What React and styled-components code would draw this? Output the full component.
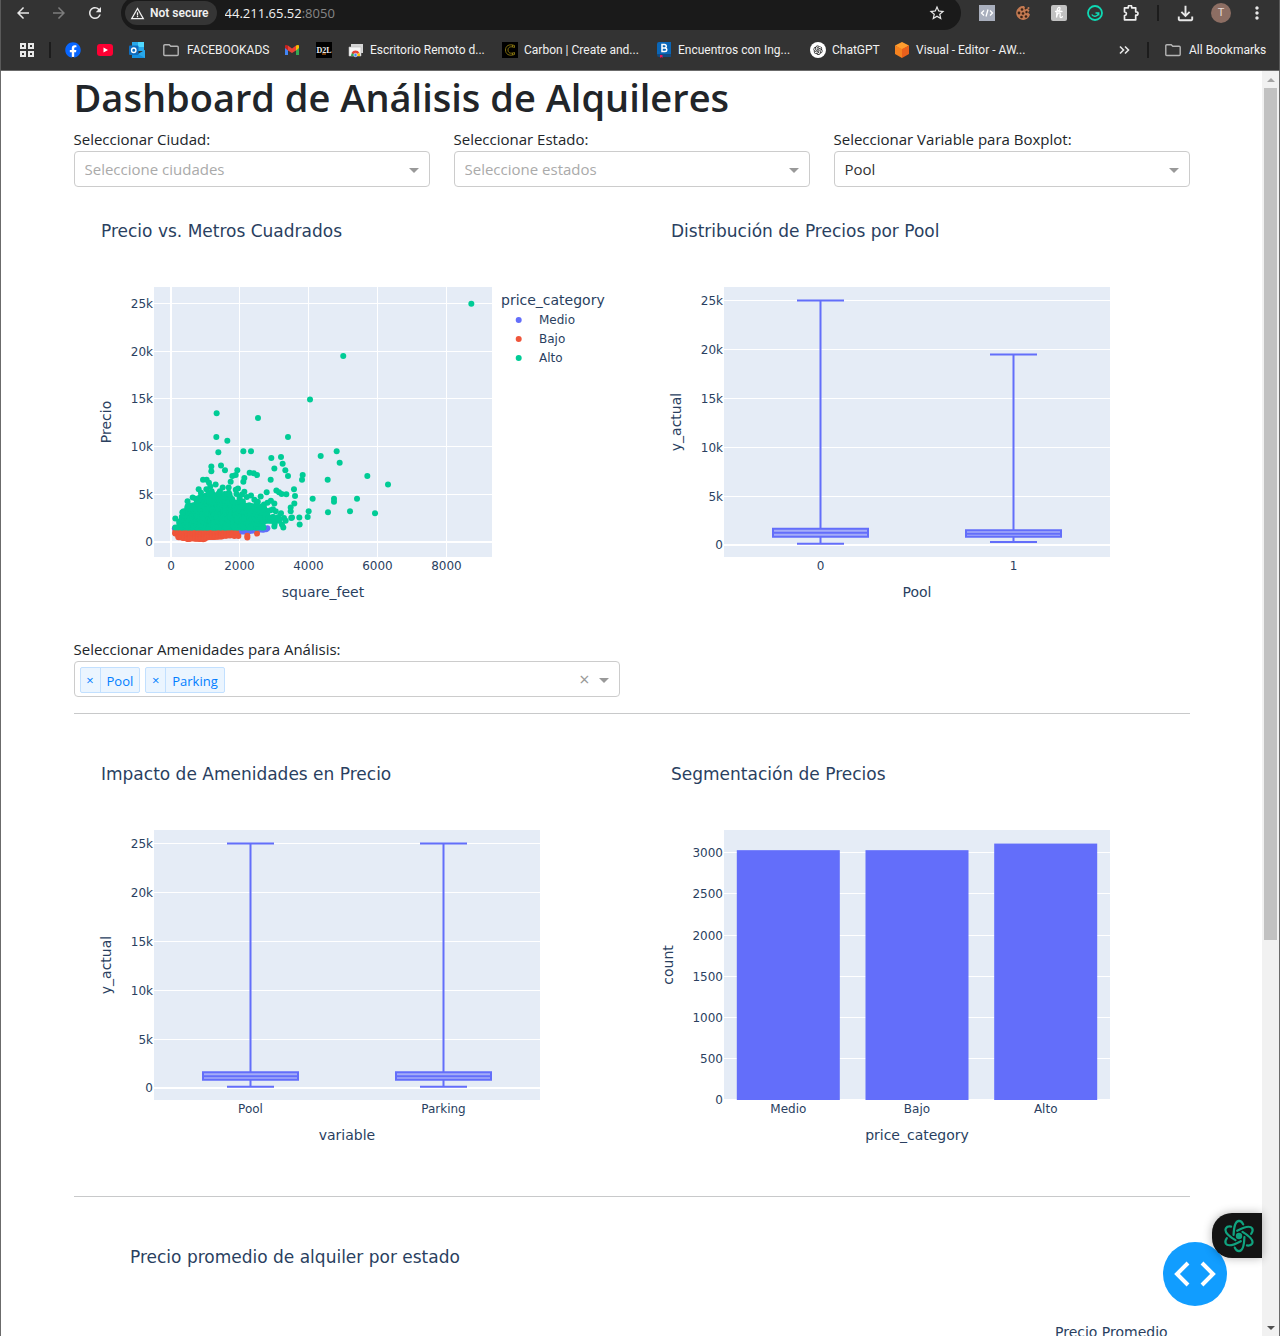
import React, { useState } from "react";
import styled, { createGlobalStyle } from "styled-components";
import {
  MdArrowBack,
  MdArrowForward,
  MdRefresh,
  MdStarBorder,
  MdWarningAmber,
  MdMoreVert,
  MdOutlineFileDownload,
} from "react-icons/md";
import { FaFacebook, FaYoutube, FaCookieBite } from "react-icons/fa";
import { AiOutlineOpenAI } from "react-icons/ai";

const uiFont = '"Open Sans", "Noto Sans", sans-serif';
const chromeFont = 'Roboto, "Open Sans", sans-serif';
const plotFont = '"DejaVu Sans", sans-serif';

const GlobalStyle = createGlobalStyle`
  *, *::before, *::after { box-sizing: border-box; }
  body {
    margin: 0;
    background: #fff;
    color: #212529;
    font-family: ${uiFont};
    font-size: 15px;
    line-height: 24px;
  }
  button, input, select { font: inherit; color: inherit; }
`;

/* ---------- browser window ---------- */

const Window = styled.div`
  display: flex;
  flex-direction: column;
  height: 100vh;
  overflow: hidden;
`;

const Chrome = styled.header`
  background: #333;
  color: #e8e8e8;
  border-bottom: 1px solid #6b6b6b;
  border-left: 1px solid #5a5a5a;
  border-right: 1px solid #5a5a5a;
  font-family: ${chromeFont};
  font-size: 12px;
  line-height: 16px;
`;

const Toolbar = styled.div`
  display: flex;
  align-items: flex-start;
  height: 30px;
  padding: 0 4px;
  overflow: hidden;
`;

const IconButton = styled.button`
  display: flex;
  align-items: center;
  justify-content: center;
  flex: none;
  width: 36px;
  height: 26px;
  padding: 0;
  border: 0;
  background: none;
  color: ${(p) => (p.$dim ? "#7d7d7d" : "#e8e8e8")};
`;

const AddressBar = styled.div`
  display: flex;
  align-items: center;
  flex: 1;
  height: 34px;
  margin: -4px 8px 0;
  padding: 0 6px 0 4px;
  border-radius: 17px;
  background: #1a1a1a;
`;

const SecurityChip = styled.button`
  display: flex;
  align-items: center;
  gap: 5px;
  height: 24px;
  padding: 0 8px 0 5px;
  border: 0;
  border-radius: 12px;
  background: #353535;
  color: #f0f0f0;
  font-weight: 600;
  white-space: nowrap;
`;

const UrlInput = styled.input`
  field-sizing: content;
  margin: 0 0 0 8px;
  padding: 0;
  border: 0;
  outline: 0;
  background: none;
  color: #f1f1f1;
  font-family: ${uiFont};
  font-size: 13px;
`;

const Port = styled.span`
  flex: 1;
  color: #868686;
  font-family: ${uiFont};
  font-size: 13px;
`;

const BarDivider = styled.span`
  flex: none;
  width: 2px;
  height: 16px;
  margin: ${(p) => p.$margin};
  background: #1c1c1c;
`;

const Avatar = styled.span`
  display: flex;
  align-items: center;
  justify-content: center;
  width: 20px;
  height: 20px;
  border-radius: 50%;
  background: #8d6e63;
  color: #e6dbd7;
  font-size: 11px;
`;

const BookmarksBar = styled.nav`
  display: flex;
  align-items: center;
  height: 40px;
  padding: 0 6px 0 10px;
`;

const Bookmark = styled.a`
  display: flex;
  align-items: center;
  flex: none;
  gap: ${(p) => p.$gap || 6}px;
  padding: 0 8px;
  margin-right: ${(p) => (p.$spaced ? 2 : 0)}px;
  color: #f1f1f1;
  text-decoration: none;
  white-space: nowrap;
`;

const BookmarkLabel = styled.span`
  min-width: ${(p) => p.$width}px;
  width: ${(p) => p.$width}px;
`;

const Spacer = styled.span`
  flex: 1;
`;

/* ---------- page ---------- */

const Viewport = styled.div`
  position: relative;
  display: flex;
  flex: 1;
  min-height: 0;
  border-left: 1px solid #6b6b6b;
  border-right: 1px solid #6b6b6b;
`;

const Page = styled.main`
  flex: 1;
  min-width: 0;
  overflow: hidden;
`;

const Container = styled.div`
  max-width: 1140px;
  margin: 0 auto;
  padding: 0 12px;
`;

const Title = styled.h1`
  margin: 0 0 4px;
  font-size: 38px;
  font-weight: 600;
  line-height: 52px;
`;

const Row = styled.div`
  display: grid;
  grid-template-columns: repeat(${(p) => p.$columns}, minmax(0, 1fr));
  column-gap: 24px;
`;

const FieldLabel = styled.label`
  display: block;
`;

const SelectBox = styled.div`
  position: relative;
  display: flex;
  align-items: center;
  height: 36px;
  border: 1px solid #ccc;
  border-radius: 4px;
  background: #fff;
`;

const NativeSelect = styled.select`
  width: 100%;
  height: 34px;
  padding: 0 30px 0 10px;
  border: 0;
  outline: 0;
  appearance: none;
  background: none;
  color: ${(p) => (p.$empty ? "#aaa" : "#333")};
`;

const Caret = styled.span`
  position: absolute;
  right: 10px;
  top: 16px;
  border: 5px solid transparent;
  border-top-color: #999;
  border-bottom: 0;
  pointer-events: none;
`;

const Tag = styled.span`
  display: flex;
  height: 26px;
  margin: 2px 0 0 5px;
  border: 1px solid #c2e0ff;
  border-radius: 2px;
  background: #ebf5ff;
  color: #007eff;
  font-size: 13px;
`;

const TagRemove = styled.button`
  width: 20px;
  padding: 0;
  border: 0;
  border-right: 1px solid #c2e0ff;
  background: none;
`;

const TagText = styled.span`
  padding: 1px 6px 0;
`;

const TagInput = styled.input`
  flex: 1;
  min-width: 0;
  border: 0;
  outline: 0;
  background: none;
`;

const ClearButton = styled.button`
  width: 18px;
  margin-right: 25px;
  padding: 0;
  border: 0;
  background: none;
  color: #999;
  font-size: 18px;
`;

const Rule = styled.hr`
  margin: 16px 0;
  border: 0;
  border-top: 1px solid #c8c9ca;
`;

const Plot = styled.svg`
  display: block;
  width: 100%;
  height: auto;
  font-family: ${plotFont};
  fill: #2a3f5f;
`;

const Scrollbar = styled.div`
  display: flex;
  flex-direction: column;
  align-items: center;
  flex: none;
  width: 17px;
  background: #f1f1f1;
`;

const ScrollArrow = styled.span`
  display: flex;
  align-items: center;
  justify-content: center;
  height: 17px;
`;

const ScrollTrack = styled.div`
  flex: 1;
  width: 13px;
`;

const ScrollThumb = styled.div`
  height: 69.2%;
  background: #c1c1c1;
`;

const DebugButton = styled.button`
  position: absolute;
  right: 52px;
  bottom: 30px;
  display: flex;
  align-items: center;
  justify-content: center;
  width: 64px;
  height: 64px;
  padding: 0;
  border: 0;
  border-radius: 50%;
  background: #119dff;
`;

const AssistantTab = styled.button`
  position: absolute;
  right: 17px;
  bottom: 78px;
  display: flex;
  align-items: center;
  justify-content: center;
  width: 50px;
  height: 45px;
  padding: 0 0 0 4px;
  border: 0;
  border-radius: 20px 0 0 20px;
  background: #141414;
  box-shadow: 0 0 10px rgba(0, 0, 0, 0.3);
`;

/* ---------- icons ---------- */

const Svg16 = ({ children, size = 16 }) => (
  <svg width={size} height={size} viewBox="0 0 16 16" aria-hidden="true">
    {children}
  </svg>
);

const AppsIcon = () => (
  <Svg16>
    <g fill="none" stroke="#e8e8e8" strokeWidth="2">
      <rect x="2" y="2" width="4" height="4" />
      <rect x="10" y="2" width="4" height="4" />
      <rect x="2" y="10" width="4" height="4" />
      <rect x="10" y="10" width="4" height="4" />
    </g>
  </Svg16>
);

const FolderIcon = () => (
  <Svg16>
    <path
      d="M1.800 2.700h4.400l1.600 1.600h6.400q1 0 1 1v7.200q0 1-1 1H1.800q-1 0-1-1V3.700q0-1 1-1z"
      fill="none"
      stroke="#b4b4b4"
      strokeWidth="1.400"
    />
  </Svg16>
);

const FacebookIcon = () => (
  <Svg16>
    <circle cx="8" cy="8" r="7" fill="#fff" />
    <FaFacebook size={16} color="#0866ff" />
  </Svg16>
);

const YoutubeIcon = () => (
  <Svg16>
    <rect x="0" y="2" width="16" height="12" rx="3" fill="#ff0033" />
    <path d="M6.500 5.500v5L11 8z" fill="#fff" />
  </Svg16>
);

const OutlookIcon = () => (
  <Svg16>
    <path d="M3 0h12v9H3z" fill="#28a8ea" />
    <path d="M9 0h6v5H9z" fill="#50d9ff" />
    <path d="M3 4h6v6H3z" fill="#0364b8" />
    <path d="M3 8l6.500 4L16 8v8H3z" fill="#1490df" />
    <path d="M9 12l7-4v8z" fill="#28a8ea" />
    <rect x="0" y="3.500" width="9.500" height="9.500" rx="1" fill="#0f6cbd" />
    <circle cx="4.750" cy="8.250" r="2.200" fill="none" stroke="#fff" strokeWidth="1.400" />
  </Svg16>
);

const GmailIcon = () => (
  <Svg16>
    <path d="M1 5v8h3V7z" fill="#4285f4" />
    <path d="M12 7v6h3V5z" fill="#34a853" />
    <path d="M4 3.600v4.800L8 11l4-2.600V3.600L8 6.600z" fill="#ea4335" />
    <path d="M1 4v2l3 2.400V3.600C2.700 2.600 1 2.700 1 4z" fill="#c5221f" />
    <path d="M12 3.600v4.800L15 6V4c0-1.300-1.700-1.400-3-.4z" fill="#fbbc04" />
  </Svg16>
);

const D2LIcon = () => (
  <Svg16>
    <rect width="16" height="16" fill="#000" />
    <text x="8" y="11" textAnchor="middle" fontFamily="Liberation Serif, serif" fontWeight="700" fontSize="8" fill="#eee">
      D2L
    </text>
    <path d="M6 12h4" stroke="#e87511" />
  </Svg16>
);

const RemoteIcon = () => (
  <Svg16>
    <path d="M3 2h12v9H3z" fill="#d5d5d5" />
    <path d="M1 5h12v9H1z" fill="#f5f5f5" stroke="#bbb" strokeWidth="0.6" />
    <path d="M3 14a4.500 4.500 0 0 1 2-4l2 2v2z" fill="#34a853" />
    <path d="M3.500 11a4.500 4.500 0 0 1 8 0l-2.500 1H6z" fill="#ea4335" />
    <path d="M11.500 11a5 5 0 0 1 .5 3H9v-2z" fill="#fbbc04" />
    <circle cx="7.500" cy="13" r="1.700" fill="#4285f4" stroke="#fff" strokeWidth="0.6" />
  </Svg16>
);

const CarbonIcon = () => (
  <Svg16>
    <rect width="16" height="16" fill="#000" />
    <path
      d="M12.500 5.500V3.500C7 1.500 3.500 4 3.500 8s3.500 6.500 9 4.500v-2c-4 1.500-6.500.5-6.500-2.500s2.500-4 6.500-2.500zM10.500 3v2M10.500 11v2"
      fill="none"
      stroke="#8d7a12"
      strokeWidth="0.9"
    />
  </Svg16>
);

const BookIcon = () => (
  <Svg16>
    <path d="M1 2a2 2 0 0 1 2-2h12v12H1z" fill="#0a66b7" />
    <path d="M1 12h14v3H3a2 2 0 0 1-2-2z" fill="#124a80" />
    <path d="M4 13h2.500v3L5.200 15 4 16z" fill="#e3175b" />
    <path d="M6 2.500h2.500a1.600 1.600 0 0 1 0 3.500H6zM6 6h3a1.700 1.700 0 0 1 0 3.500H6z" fill="none" stroke="#fff" strokeWidth="1.500" />
  </Svg16>
);

const ChatIcon = () => (
  <Svg16>
    <circle cx="8" cy="8" r="8" fill="#fff" />
    <g transform="translate(2 2)">
      <AiOutlineOpenAI size={12} color="#222" />
    </g>
  </Svg16>
);

const CubeIcon = () => (
  <Svg16>
    <path d="M8 0l7 3.500L8 8 1 3.500z" fill="#ff9d2e" />
    <path d="M1 3.500L8 7v9l-7-4z" fill="#f5821f" />
    <path d="M15 3.500L8 7v9l7-4z" fill="#e9601c" />
  </Svg16>
);

const CodeExtIcon = () => (
  <Svg16>
    <rect width="16" height="16" fill="#a9afbd" />
    <path d="M5 5.500L2.500 8 5 10.500M11 5.500L13.500 8 11 10.500M9 4.500l-2 7" fill="none" stroke="#fff" strokeWidth="1.300" />
  </Svg16>
);

const CookieIcon = () => (
  <Svg16>
    <path d="M9 1a7 7 0 1 0 6 8.500l-2-2 1.500-2-2-2-1.500.5z" fill="#c47a52" />
    <g fill="#3b2417">
      <circle cx="7" cy="4.500" r="1.300" />
      <circle cx="4" cy="8" r="1.400" />
      <circle cx="8" cy="8.500" r="1.300" />
      <circle cx="11.500" cy="7" r="1.200" />
      <circle cx="6.500" cy="12" r="1.300" />
      <circle cx="11" cy="11.500" r="1.300" />
      <circle cx="10.500" cy="3.500" r="0.900" />
    </g>
    <circle cx="13.500" cy="3" r="1" fill="#c47a52" />
  </Svg16>
);

const HoneyIcon = () => (
  <Svg16>
    <rect width="16" height="16" rx="2" fill="#c1c1c1" />
    <path
      d="M4.500 6.500c3 0 5-2 4.500-3.500s-2.500-.5-2.800 2L5.500 12.500C6.200 9 7.500 7.700 8.600 7.900s.6 1.900.4 3.200.8 2 2.400.6M7 6l4 .5"
      fill="none"
      stroke="#fff"
      strokeWidth="1.300"
      strokeLinecap="round"
    />
  </Svg16>
);

const GrammarIcon = () => (
  <Svg16>
    <circle cx="8" cy="8" r="7" fill="none" stroke="#0fd9b4" strokeWidth="1.800" />
    <path d="M4.800 9.500a3.600 3.600 0 0 0 6.700-1.700M8.500 8h3.200v2.500" fill="none" stroke="#0fd9b4" strokeWidth="1.400" />
  </Svg16>
);

const PuzzleIcon = () => (
  <Svg16>
    <path
      d="M1.500 2.800h3.800V2a1.700 1.700 0 0 1 3.400 0v.8h4v4h.6a1.700 1.700 0 0 1 0 3.400h-.6v4.600H1.500v-4.200c2.600-.4 2.600-3.200 0-3.600z"
      fill="none"
      stroke="#eee"
      strokeWidth="1.700"
      strokeLinejoin="round"
    />
  </Svg16>
);

const ChevronsIcon = () => (
  <Svg16>
    <path d="M3 4.500L6.500 8 3 11.500M8 4.500L11.500 8 8 11.500" fill="none" stroke="#e8e8e8" strokeWidth="1.600" />
  </Svg16>
);

const AtomIcon = () => (
  <svg width="32" height="36" viewBox="0 0 32 36" aria-hidden="true">
    <g fill="none" stroke="#10a37f" strokeWidth="2.200" strokeLinecap="round">
      {[0, 60, 120, 180, 240, 300].map((angle) => (
        <path
          key={angle}
          d="M10.600 17C10.800 9 12.500 3 16 2.800c2 0 3.300 1.400 4.200 3.600"
          transform={`rotate(${angle} 16 18)`}
        />
      ))}
    </g>
    <circle cx="16" cy="18" r="3.200" fill="#10a37f" />
  </svg>
);

/* ---------- charts ---------- */

const GREEN = "#00cc96";
const RED = "#ef553b";
const BLUE = "#636efa";
const PANEL = "#e5ecf6";

const kilo = (v) => (v === 0 ? "0" : `${v / 1000}k`);

function YAxis({ ticks, scale, x1, x2, format, heavyZero = true }) {
  return ticks.map((t) => (
    <g key={t}>
      <path d={`M${x1} ${scale(t)}H${x2}`} stroke="#fff" strokeWidth={t === 0 && heavyZero ? 2 : 1} />
      <text x={x1 - 1} y={scale(t) + 4} textAnchor="end" fontSize="12">
        {format(t)}
      </text>
    </g>
  ));
}

function YTitle({ x = 37, children }) {
  return (
    <text transform={`translate(${x} 235) rotate(-90)`} textAnchor="middle" fontSize="14">
      {children}
    </text>
  );
}

const sx = (v) => 97 + v * 0.03445;
const sy = (v) => 354.7 - v * 0.00952;

const outliers = [
  [5000, 19500], [4035, 14950], [1325, 13500], [2525, 13000], [1316, 11000], [1635, 10600],
  [3396, 11000], [1374, 9400], [2100, 9500], [2322, 9500], [2912, 8800], [3193, 8900],
  [3241, 8200], [3000, 7700], [3319, 7500], [3396, 6900], [2893, 6500], [4345, 9000],
  [4809, 9500], [4896, 8300], [3822, 7000], [3803, 6500], [4548, 6500], [3570, 5500],
  [3600, 4800], [3580, 4000], [4112, 4500], [4732, 4500], [4732, 4200], [4557, 3100],
  [3996, 3200], [3967, 2600], [3725, 2550], [3735, 1800], [3474, 3600], [3474, 3200],
  [3512, 2550], [5400, 4500], [5196, 3200], [5922, 3000], [5699, 6900], [6299, 6000],
  [8718, 25000], [1171, 7900], [1171, 7400], [1451, 8000], [1567, 7500], [1925, 7500],
  [1877, 7000], [1780, 6900], [1732, 6300], [2129, 6700], [2100, 6300], [2283, 7250],
  [2400, 7200], [2496, 7000], [929, 6500], [1035, 6500], [1103, 6200], [1142, 5800],
  [1296, 6000], [1500, 5700], [1674, 5700], [1945, 5600], [1880, 5450], [803, 5500],
  [1026, 5500], [870, 5150], [2129, 5250], [2777, 5200], [3058, 5370], [3135, 5200],
  [3212, 5000], [3348, 4980], [629, 4650], [2322, 4850], [2603, 4750], [126, 2450],
  [3000, 1600], [3010, 1850], [3260, 1500], [3220, 1800], [3328, 2200], [3193, 3000],
  [2900, 4300], [3000, 4000], [3280, 2500], [2800, 4100], [3490, 2500], [3120, 2600],
  [3150, 2300], [3040, 3200], [2960, 2600], [480, 4250], [720, 4500], [1100, 5100],
  [1230, 4950], [1390, 5100], [1560, 5000], [1700, 4950], [1900, 5000], [2060, 4950],
  [2200, 4700], [1990, 4600], [2420, 4400], [2520, 4200], [2700, 3900], [2620, 3700],
  [2480, 3900], [1180, 5300], [1420, 5300], [2890, 3300], [2960, 3400], [330, 3100],
];

const ceiling = [
  [150, 1600], [300, 2500], [440, 3800], [560, 4050], [700, 4300], [870, 4800], [1700, 4850],
  [1850, 4300], [2050, 4300], [2250, 3900], [2450, 3500], [2700, 3300], [2900, 2900],
  [3100, 2500], [3200, 2300],
];

function ceilingAt(x) {
  const i = ceiling.findIndex(([cx]) => cx >= x);
  if (i <= 0) return ceiling[0][1];
  const [x0, y0] = ceiling[i - 1];
  const [x1, y1] = ceiling[i];
  return y0 + ((x - x0) / (x1 - x0)) * (y1 - y0);
}

function makeRandom(seed) {
  let s = seed;
  return () => {
    s = (s * 16807) % 2147483647;
    return s / 2147483647;
  };
}

const rand = makeRandom(41);

const altoCloud = [];
for (let x = 155; x <= 3120; x += 60) {
  const top = ceilingAt(x) + (x > 500 ? (rand() - 0.5) * 500 : 0);
  const bottom = x > 2680 ? 2200 : 1490;
  const step = x > 2100 ? 330 : 240;
  for (let y = bottom; y <= top; y += step) {
    altoCloud.push([x + (rand() - 0.5) * 60, y + (y > bottom ? (rand() - 0.5) * 200 : 0)]);
  }
}

const bajoCloud = [];
for (let x = 125; x <= 1800; x += 45) {
  const floor = x < 200 ? 850 : x < 350 ? 480 : x < 1000 ? 260 + rand() * 160 : 350 + (x - 1000) * 0.4 + rand() * 120;
  for (let y = 1050; y > floor; y -= 150) bajoCloud.push([x, y]);
  bajoCloud.push([x, floor]);
}
bajoCloud.push([1840, 600], [1955, 600], [2216, 450], [2216, 620], [2496, 850], [1900, 950]);

const medioCloud = [[110, 1380], [2796, 1420], [2760, 1300]];
for (let x = 1960; x <= 2700; x += 60) medioCloud.push([x, 1000 + (x - 1960) * 0.35 + rand() * 80], [x, 1350]);

function Points({ data, color }) {
  return (
    <g fill={color}>
      {data.map(([x, y], i) => (
        <circle key={i} cx={sx(x)} cy={sy(y)} r="3" />
      ))}
    </g>
  );
}

function ScatterPlot() {
  return (
    <Plot viewBox="0 0 546 450" role="img" aria-label="Precio vs. Metros Cuadrados">
      <text x="27" y="50" fontSize="17">Precio vs. Metros Cuadrados</text>
      <rect x="80" y="100" width="338" height="270" fill={PANEL} />
      {[0, 2000, 4000, 6000, 8000].map((t) => {
        const x = t === 0 ? 97 : Math.round(sx(t)) - 0.5;
        return (
          <g key={t}>
            <path d={`M${x} 100V370`} stroke="#fff" strokeWidth={t === 0 ? 2 : 1} />
            <text x={x} y="383" textAnchor="middle" fontSize="12">{t}</text>
          </g>
        );
      })}
      <YAxis
        ticks={[0, 5000, 10000, 15000, 20000, 25000]}
        scale={(v) => (v === 0 ? 355 : Math.floor(sy(v)) + 0.5)}
        x1={80}
        x2={418}
        format={kilo}
      />
      <Points data={medioCloud} color={BLUE} />
      <Points data={bajoCloud} color={RED} />
      <Points data={altoCloud} color={GREEN} />
      <Points data={outliers} color={GREEN} />
      <text x="249" y="410" textAnchor="middle" fontSize="14">square_feet</text>
      <YTitle>Precio</YTitle>
      <text x="427" y="118" fontSize="14">price_category</text>
      {[["Medio", BLUE], ["Bajo", RED], ["Alto", GREEN]].map(([name, color], i) => (
        <g key={name}>
          <circle cx="444.700" cy={133 + i * 19} r="3" fill={color} />
          <text x="465" y={137 + i * 19} fontSize="12">{name}</text>
        </g>
      ))}
    </Plot>
  );
}

const by = (v) => 358.5 - v * 0.0098;

function BoxPlot({ title, axis, groups }) {
  return (
    <Plot viewBox="0 0 546 450" role="img" aria-label={title}>
      <text x="27" y="50" fontSize="17">{title}</text>
      <rect x="80" y="100" width="386" height="270" fill={PANEL} />
      <YAxis
        ticks={[0, 5000, 10000, 15000, 20000, 25000]}
        scale={(v) => (v === 0 ? 358 : Math.floor(by(v)) + 0.5)}
        x1={80}
        x2={466}
        format={kilo}
      />
      {groups.map((g, i) => {
        const c = 176.5 + i * 193;
        return (
          <g key={g.name}>
            <path
              d={`M${c - 47.5} ${by(g.q3)}H${c + 47.5}V${by(g.q1)}H${c - 47.5}ZM${c - 47.5} ${by(g.mid)}H${c + 47.5}M${c} ${by(g.q3)}V${by(g.max)}M${c} ${by(g.q1)}V${by(g.min)}M${c - 23.5} ${by(g.max)}h47M${c - 23.5} ${by(g.min)}h47`}
              fill={BLUE}
              fillOpacity="0.5"
              stroke={BLUE}
              strokeWidth="2"
            />
            <text x={c} y="383" textAnchor="middle" fontSize="12">{g.name}</text>
          </g>
        );
      })}
      <text x="273" y="410" textAnchor="middle" fontSize="14">{axis}</text>
      <YTitle>y_actual</YTitle>
    </Plot>
  );
}

const cy = (v) => 370 - v * 0.08245;

function BarPlot() {
  return (
    <Plot viewBox="0 0 546 450" role="img" aria-label="Segmentación de Precios">
      <text x="27" y="50" fontSize="17">Segmentación de Precios</text>
      <rect x="80" y="100" width="386" height="270" fill={PANEL} />
      <YAxis
        ticks={[0, 500, 1000, 1500, 2000, 2500, 3000]}
        scale={(v) => Math.floor(cy(v)) + (v === 0 ? -0.5 : 0.5)}
        x1={80}
        x2={466}
        format={String}
        heavyZero={false}
      />
      {[["Medio", 3030], ["Bajo", 3030], ["Alto", 3110]].map(([name, count], i) => {
        const c = 144.3 + i * 128.7;
        return (
          <g key={name}>
            <rect x={c - 51.5} y={cy(count)} width="103" height={370 - cy(count)} fill={BLUE} />
            <text x={c} y="383" textAnchor="middle" fontSize="12">{name}</text>
          </g>
        );
      })}
      <text x="273" y="410" textAnchor="middle" fontSize="14">price_category</text>
      <YTitle x={29}>count</YTitle>
    </Plot>
  );
}

function StatePlot() {
  return (
    <Plot viewBox="0 0 1116 450" role="img" aria-label="Precio promedio de alquiler por estado">
      <text x="56" y="50" fontSize="17">Precio promedio de alquiler por estado</text>
      <text x="981" y="124" fontSize="14">Precio Promedio</text>
    </Plot>
  );
}

/* ---------- controls ---------- */

function Dropdown({ id, label, placeholder, options, initial = "" }) {
  const [value, setValue] = useState(initial);
  return (
    <div>
      <FieldLabel htmlFor={id}>{label}</FieldLabel>
      <SelectBox>
        <NativeSelect id={id} value={value} $empty={!value} onChange={(e) => setValue(e.target.value)}>
          {placeholder && <option value="">{placeholder}</option>}
          {options.map((o) => (
            <option key={o}>{o}</option>
          ))}
        </NativeSelect>
        <Caret />
      </SelectBox>
    </div>
  );
}

function AmenityPicker() {
  const [tags, setTags] = useState(["Pool", "Parking"]);
  return (
    <div>
      <FieldLabel htmlFor="amenidades">Seleccionar Amenidades para Análisis:</FieldLabel>
      <SelectBox>
        {tags.map((t) => (
          <Tag key={t}>
            <TagRemove aria-label={`Quitar ${t}`} onClick={() => setTags(tags.filter((x) => x !== t))}>×</TagRemove>
            <TagText>{t}</TagText>
          </Tag>
        ))}
        <TagInput id="amenidades" />
        <ClearButton aria-label="Borrar todo" onClick={() => setTags([])}>×</ClearButton>
        <Caret />
      </SelectBox>
    </div>
  );
}

const textBookmarks = [
  { label: "Escritorio Remoto d...", width: 114, Icon: RemoteIcon },
  { label: "Carbon | Create and...", width: 114, Icon: CarbonIcon },
  { label: "Encuentros con Ing...", width: 114, Icon: BookIcon },
  { label: "ChatGPT", width: 44, Icon: ChatIcon },
  { label: "Visual - Editor - AW...", width: 113, Icon: CubeIcon },
];

function BrowserChrome() {
  return (
    <Chrome>
      <Toolbar>
        <IconButton aria-label="Back"><MdArrowBack size={18} /></IconButton>
        <IconButton aria-label="Forward" $dim><MdArrowForward size={18} /></IconButton>
        <IconButton aria-label="Reload"><MdRefresh size={18} /></IconButton>
        <AddressBar>
          <SecurityChip><MdWarningAmber size={15} />Not secure</SecurityChip>
          <UrlInput aria-label="Address" defaultValue="44.211.65.52" />
          <Port>:8050</Port>
          <IconButton aria-label="Bookmark this tab"><MdStarBorder size={18} /></IconButton>
        </AddressBar>
        <IconButton aria-label="Code"><CodeExtIcon /></IconButton>
        <IconButton aria-label="Cookies"><CookieIcon /></IconButton>
        <IconButton aria-label="Honey"><HoneyIcon /></IconButton>
        <IconButton aria-label="Grammar"><GrammarIcon /></IconButton>
        <IconButton aria-label="Extensions"><PuzzleIcon /></IconButton>
        <BarDivider $margin="5px 8px" />
        <IconButton aria-label="Downloads"><MdOutlineFileDownload size={23} /></IconButton>
        <IconButton aria-label="Profile"><Avatar>T</Avatar></IconButton>
        <IconButton aria-label="Menu"><MdMoreVert size={20} /></IconButton>
      </Toolbar>
      <BookmarksBar>
        <Bookmark href="#apps" aria-label="Apps"><AppsIcon /></Bookmark>
        <BarDivider $margin="0 6px" />
        <Bookmark href="#facebook" aria-label="Facebook"><FacebookIcon /></Bookmark>
        <Bookmark href="#youtube" aria-label="YouTube"><YoutubeIcon /></Bookmark>
        <Bookmark href="#outlook" aria-label="Outlook" $spaced><OutlookIcon /></Bookmark>
        <Bookmark href="#ads" $gap={8}>
          <FolderIcon />
          <BookmarkLabel $width={81}>FACEBOOKADS</BookmarkLabel>
        </Bookmark>
        <Bookmark href="#gmail" aria-label="Gmail"><GmailIcon /></Bookmark>
        <Bookmark href="#d2l" aria-label="D2L"><D2LIcon /></Bookmark>
        {textBookmarks.map(({ label, width, Icon }) => (
          <Bookmark key={label} href="#bookmark" $spaced>
            <Icon />
            <BookmarkLabel $width={width}>{label}</BookmarkLabel>
          </Bookmark>
        ))}
        <Spacer />
        <IconButton aria-label="More bookmarks"><ChevronsIcon /></IconButton>
        <BarDivider $margin="0 8px 0 4px" />
        <Bookmark href="#all" $gap={8}>
          <FolderIcon />
          <BookmarkLabel $width={76}>All Bookmarks</BookmarkLabel>
        </Bookmark>
      </BookmarksBar>
    </Chrome>
  );
}

export default function App() {
  return (
    <>
      <GlobalStyle />
      <Window>
        <BrowserChrome />
        <Viewport>
          <Page>
            <Container>
              <Title>Dashboard de Análisis de Alquileres</Title>
              <Row $columns={3}>
                <Dropdown id="ciudad" label="Seleccionar Ciudad:" placeholder="Seleccione ciudades" options={[]} />
                <Dropdown id="estado" label="Seleccionar Estado:" placeholder="Seleccione estados" options={[]} />
                <Dropdown id="variable" label="Seleccionar Variable para Boxplot:" options={["Pool", "Parking"]} initial="Pool" />
              </Row>
              <Row $columns={2}>
                <ScatterPlot />
                <BoxPlot
                  title="Distribución de Precios por Pool"
                  axis="Pool"
                  groups={[
                    { name: "0", min: 180, q1: 900, mid: 1300, q3: 1700, max: 25000 },
                    { name: "1", min: 350, q1: 900, mid: 1200, q3: 1550, max: 19500 },
                  ]}
                />
              </Row>
              <Row $columns={2}>
                <AmenityPicker />
              </Row>
              <Rule />
              <Row $columns={2}>
                <BoxPlot
                  title="Impacto de Amenidades en Precio"
                  axis="variable"
                  groups={[
                    { name: "Pool", min: 180, q1: 900, mid: 1250, q3: 1650, max: 25000 },
                    { name: "Parking", min: 180, q1: 900, mid: 1250, q3: 1650, max: 25000 },
                  ]}
                />
                <BarPlot />
              </Row>
              <Rule />
              <StatePlot />
            </Container>
          </Page>
          <Scrollbar aria-hidden="true">
            <ScrollArrow>
              <svg width="8" height="4" viewBox="0 0 8 4"><path d="M0 4l4-4 4 4z" fill="#a3a3a3" /></svg>
            </ScrollArrow>
            <ScrollTrack><ScrollThumb /></ScrollTrack>
            <ScrollArrow>
              <svg width="8" height="4" viewBox="0 0 8 4"><path d="M0 0l4 4 4-4z" fill="#505050" /></svg>
            </ScrollArrow>
          </Scrollbar>
          <DebugButton aria-label="Debug menu">
            <svg width="44" height="26" viewBox="0 0 44 26" fill="none" stroke="#fff" strokeWidth="4">
              <path d="M15 2L4 13l11 11M29 2l11 11-11 11" />
            </svg>
          </DebugButton>
          <AssistantTab aria-label="Assistant"><AtomIcon /></AssistantTab>
        </Viewport>
      </Window>
    </>
  );
}
